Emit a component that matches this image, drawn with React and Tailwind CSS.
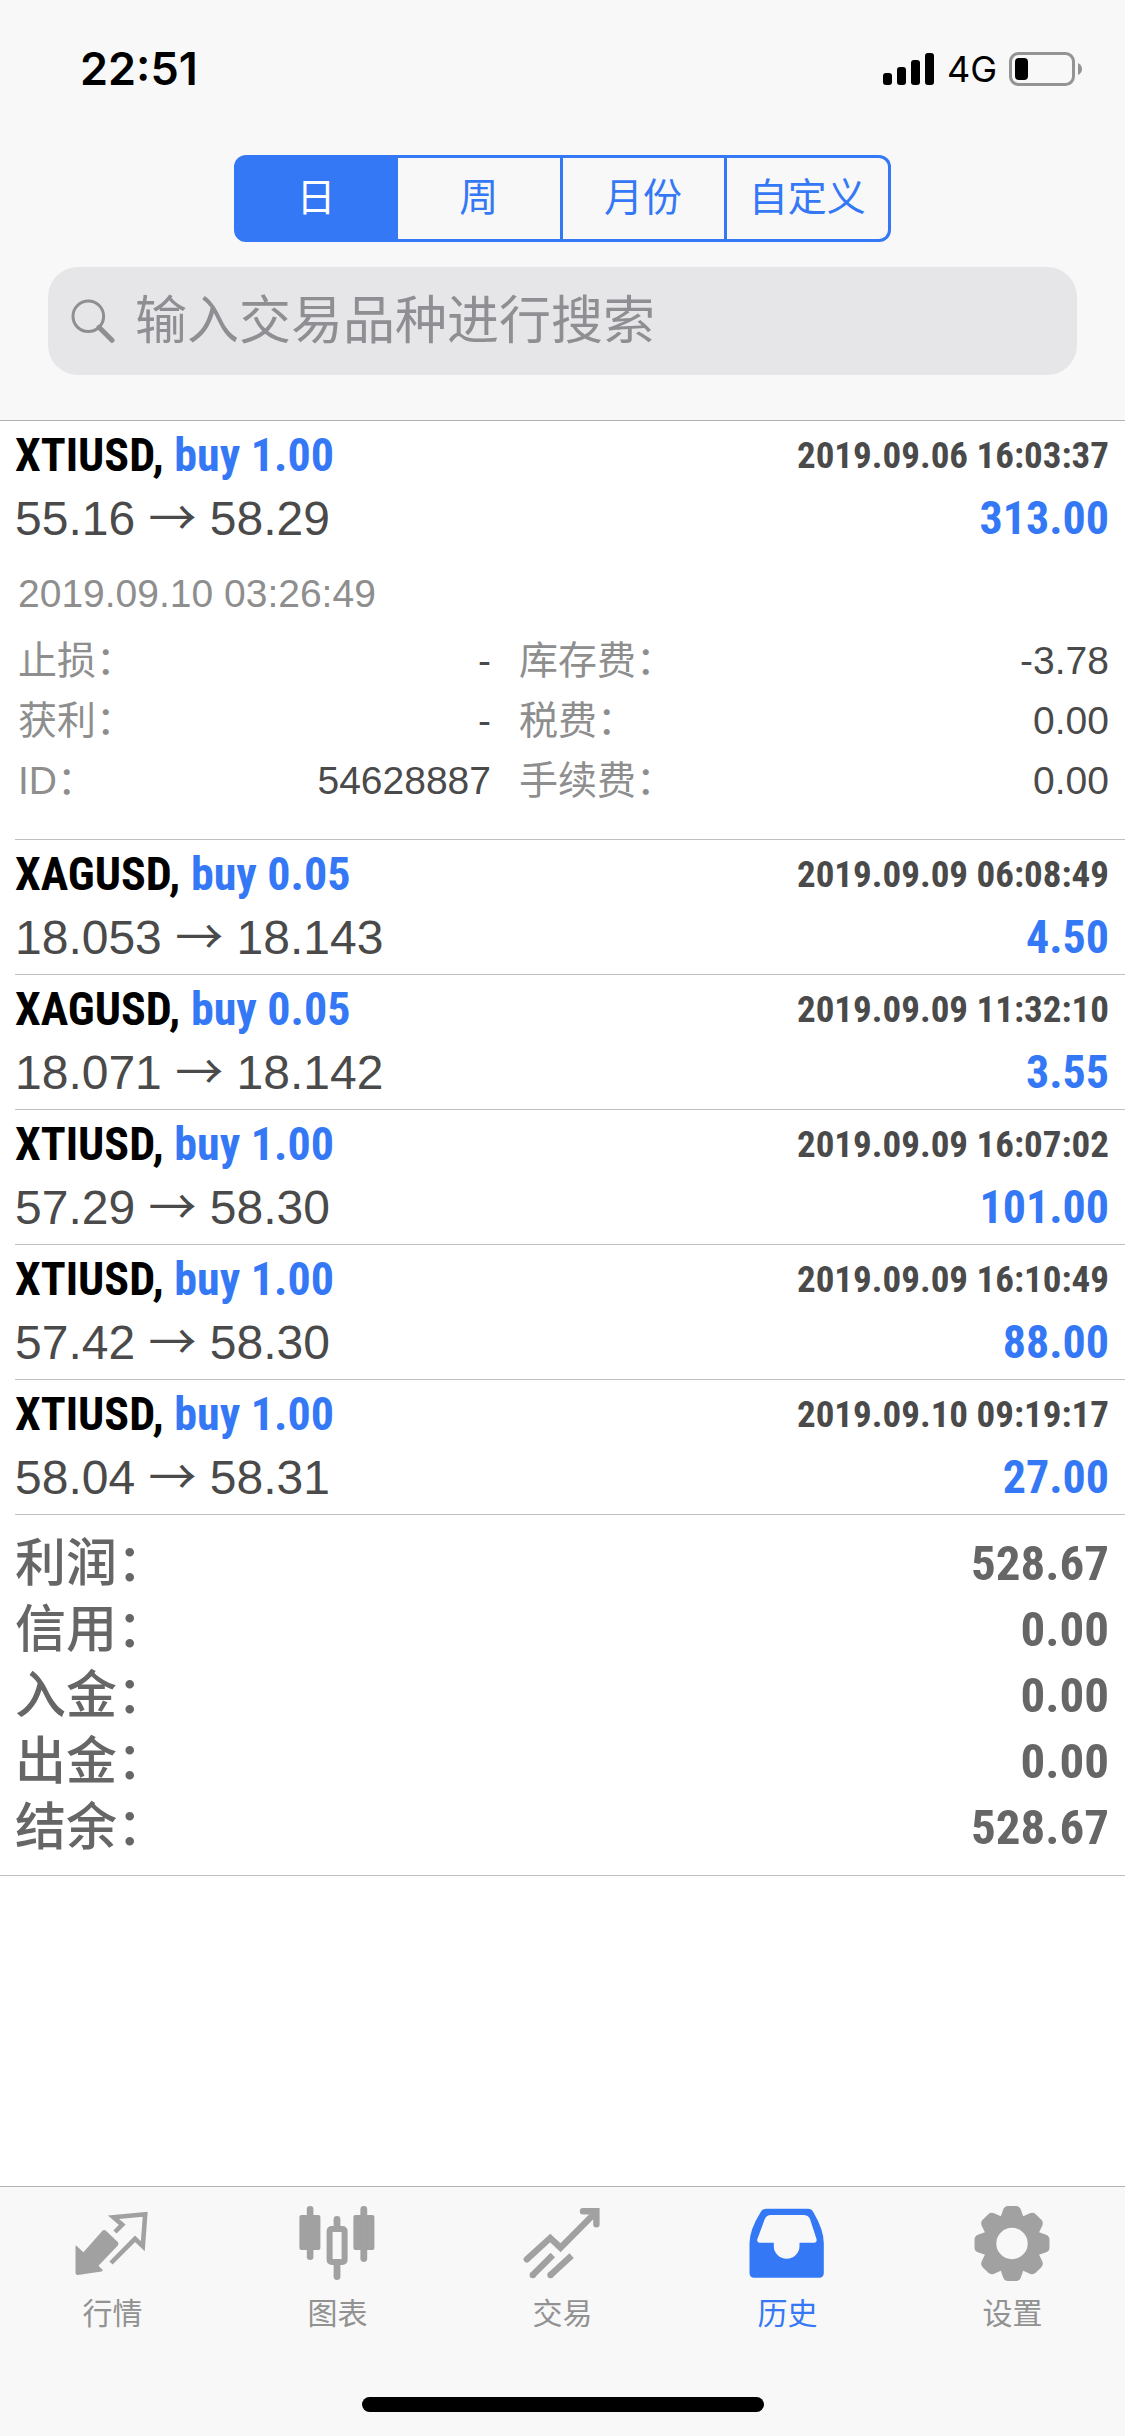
import { useState } from "react";

const periods = ["日", "周", "月份", "自定义"];

const trades = [
  {
    id: "54628887",
    symbol: "XTIUSD",
    volume: "1.00",
    open: "55.16",
    close: "58.29",
    time: "2019.09.06 16:03:37",
    profit: "313.00",
    details: {
      openTime: "2019.09.10 03:26:49",
      rows: [
        ["止损：", "-", "库存费：", "-3.78"],
        ["获利：", "-", "税费：", "0.00"],
        ["ID：", "54628887", "手续费：", "0.00"],
      ],
    },
  },
  { id: "2", symbol: "XAGUSD", volume: "0.05", open: "18.053", close: "18.143", time: "2019.09.09 06:08:49", profit: "4.50" },
  { id: "3", symbol: "XAGUSD", volume: "0.05", open: "18.071", close: "18.142", time: "2019.09.09 11:32:10", profit: "3.55" },
  { id: "4", symbol: "XTIUSD", volume: "1.00", open: "57.29", close: "58.30", time: "2019.09.09 16:07:02", profit: "101.00" },
  { id: "5", symbol: "XTIUSD", volume: "1.00", open: "57.42", close: "58.30", time: "2019.09.09 16:10:49", profit: "88.00" },
  { id: "6", symbol: "XTIUSD", volume: "1.00", open: "58.04", close: "58.31", time: "2019.09.10 09:19:17", profit: "27.00" },
];

const summary = [
  ["利润：", "528.67"],
  ["信用：", "0.00"],
  ["入金：", "0.00"],
  ["出金：", "0.00"],
  ["结余：", "528.67"],
];

function QuotesIcon() {
  return (
    <svg viewBox="0 0 80 80" className="size-20">
      <path
        d="M3.5 41.7 10.4 48.2 29 27.2Q31 25 33.5 27.2L44.8 38Q46.3 39.8 44.8 41.5L25.5 61.7 30 66.3 28.5 67.5 5 71Q2.5 71 2.5 68.5V41.7Z"
        fill="currentColor"
      />
      <path
        d="M42 28 49.2 20.7 40.5 13.2 72.2 10.3 69.8 42.2 62 34.8 38 59"
        fill="none"
        stroke="currentColor"
        strokeWidth="4.6"
      />
    </svg>
  );
}

function ChartIcon() {
  return (
    <svg viewBox="0 0 80 80" className="size-20" fill="currentColor">
      <rect x="1.4" y="11" width="21" height="35" rx="2" />
      <rect x="8.8" y="2" width="6.6" height="54" rx="3.3" />
      <rect x="55.4" y="11" width="21" height="35" rx="2" />
      <rect x="62.4" y="2" width="6.8" height="56" rx="3.4" />
      <rect x="35.6" y="12" width="6.8" height="14" rx="3.4" />
      <rect x="35.6" y="56" width="6.8" height="20" rx="3.4" />
      <rect x="31.6" y="25" width="15" height="33" rx="2" fill="none" stroke="currentColor" strokeWidth="6" />
    </svg>
  );
}

function TradeIcon() {
  return (
    <svg viewBox="0 0 80 80" className="size-20" fill="none" stroke="currentColor" strokeWidth="6.4">
      <path d="M3.8 55.3 27.2 34 37.5 43.7 72 9" strokeLinecap="round" />
      <path d="M60 7.2H73.4V20.3" strokeLinecap="round" />
      <path d="M10.5 70.3 29.8 51M28.2 70.3 48.6 51.6" />
      <path d="M9.8 71h.1M27.5 71h.1" strokeLinecap="round" />
    </svg>
  );
}

function HistoryIcon() {
  return (
    <svg viewBox="0 0 80 80" className="size-20" fill="currentColor" fillRule="evenodd">
      <path d="M18 4.7H60Q63.5 4.7 65.3 8 75.8 26 75.8 39V69Q75.8 73.7 71 73.7H6.3Q1.5 73.7 1.5 69V39Q1.5 26 12.7 8 14.5 4.7 18 4.7ZM23 11Q18.5 11 16.8 15L9.4 35Q8.4 38.7 11.5 38.7H25.8V42A12.8 12.8 0 0 0 51.5 42V38.7H66Q69.3 38.7 68.5 35L62 15Q60.3 11 55.5 11Z" />
    </svg>
  );
}

function SettingsIcon() {
  return (
    <svg viewBox="0 0 80 80" className="size-20">
      <g transform="translate(39 39.5)" fill="currentColor">
        <circle r="22.2" fill="none" stroke="currentColor" strokeWidth="13" />
        {[0, 45, 90, 135, 180, 225, 270, 315].map((a) => (
          <path
            key={a}
            transform={`rotate(${a})`}
            d="M-12-25-8.8-34Q-7.4-37.5-4-37.5H4Q7.4-37.5 8.8-34L12-25Z"
          />
        ))}
      </g>
    </svg>
  );
}

const tabs = [
  { label: "行情", Icon: QuotesIcon },
  { label: "图表", Icon: ChartIcon },
  { label: "交易", Icon: TradeIcon },
  { label: "历史", Icon: HistoryIcon, active: true },
  { label: "设置", Icon: SettingsIcon },
];

function StatusBar() {
  return (
    <div className="flex h-[132px] items-center justify-between pt-1.5 pr-[43px] pl-20 font-['Inter',sans-serif]">
      <span className="text-[45px] font-semibold">22:51</span>
      <div className="flex items-center gap-3">
        <svg viewBox="0 0 52 32" className="h-8 w-[52px]">
          <rect x="0" y="20" width="9" height="12" rx="3" />
          <rect x="14" y="14" width="9" height="18" rx="3" />
          <rect x="28" y="7" width="9" height="25" rx="3" />
          <rect x="42" y="0" width="9" height="32" rx="3" />
        </svg>
        <span className="text-[36px]">4G</span>
        <svg viewBox="0 0 73 34" className="h-[34px] w-[73px]">
          <rect x="1.5" y="1.5" width="63" height="31" rx="8" fill="none" stroke="#949494" strokeWidth="3" />
          <rect x="6" y="6" width="13" height="22" rx="4" />
          <path d="M69 11q4 2 4 6t-4 6z" fill="#949494" />
        </svg>
      </div>
    </div>
  );
}

function TradeItem({ trade }) {
  const { symbol, volume, open, close, time, profit, details } = trade;

  return (
    <li className="ml-[15px] border-b border-[#c0c0c0] pt-[3px] pr-4 pb-[5px]">
      <div className="flex justify-between font-['Roboto_Condensed',sans-serif] leading-[63px] font-bold">
        <h2 className="text-[46px] text-black">
          {symbol}, <span className="text-[#3478f6]">buy {volume}</span>
        </h2>
        <time className="text-[37px] text-[#4a4a4a]">{time}</time>
      </div>
      <div className="flex justify-between text-[48px] leading-[63px]">
        <p className="text-[#4a4a4a]">
          {open} <span className="font-['Noto_Sans_CJK_SC',sans-serif] leading-none">→</span> {close}
        </p>
        <p className="font-['Roboto_Condensed',sans-serif] text-[46px] font-bold text-[#3478f6]">{profit}</p>
      </div>

      {details && (
        <div className="pt-3.5 pb-[23px] pl-[3px] text-[39px] leading-[60px] text-[#8e8e8e]">
          <time>{details.openTime}</time>
          <div className="mt-[7px] grid grid-cols-[473px_1fr] gap-x-7">
            {details.rows.flatMap(([l1, v1, l2, v2]) => [
              <dl key={l1} className="flex justify-between">
                <dt>{l1}</dt>
                <dd className="text-[#4a4a4a]">{v1}</dd>
              </dl>,
              <dl key={l2} className="flex justify-between">
                <dt>{l2}</dt>
                <dd className="text-[#4a4a4a]">{v2}</dd>
              </dl>,
            ])}
          </div>
        </div>
      )}
    </li>
  );
}

export default function App() {
  const [period, setPeriod] = useState("日");

  return (
    <div
      lang="zh-CN"
      className="flex min-h-screen flex-col bg-white font-['Liberation_Sans','Noto_Sans_CJK_SC',sans-serif]"
    >
      <header className="border-b border-[#b2b2b2] bg-[#f8f8f8]">
        <StatusBar />
        <div className="px-12 pt-[23px] pb-[45px]">
          <div className="mx-auto grid h-[87px] w-[657px] grid-cols-4">
            {periods.map((p) => (
              <button
                key={p}
                type="button"
                onClick={() => setPeriod(p)}
                className={
                  p === period
                    ? "border-y-3 border-r-3 border-[#3478f6] bg-[#3478f6] text-[39px] text-white first:rounded-l-xl first:border-l-3 last:rounded-r-xl"
                    : "border-y-3 border-r-3 border-[#3478f6] text-[39px] text-[#3478f6] first:rounded-l-xl first:border-l-3 last:rounded-r-xl"
                }
              >
                {p}
              </button>
            ))}
          </div>

          <label className="mt-[25px] flex h-[108px] items-center gap-5 rounded-[30px] bg-[#e6e6e8] px-[23px]">
            <svg viewBox="0 0 44 44" className="size-11 shrink-0" fill="none" stroke="#8e8e93">
              <circle cx="17.3" cy="17.3" r="15.3" strokeWidth="3" />
              <path d="M28 28.3 41 41.3" strokeWidth="5" strokeLinecap="round" />
            </svg>
            <input
              type="search"
              aria-label="搜索"
              placeholder="输入交易品种进行搜索"
              className="w-full bg-transparent text-[52px] outline-none placeholder:text-[#8e8e93]"
            />
          </label>
        </div>
      </header>

      <main className="flex-1">
        <ul>
          {trades.map((trade) => (
            <TradeItem key={trade.id} trade={trade} />
          ))}
        </ul>

        <dl className="border-b border-[#c0c0c0] pt-4 pr-4 pb-3.5 pl-[15px] leading-[66px] text-[#666]">
          {summary.map(([label, value]) => (
            <div key={label} className="flex justify-between">
              <dt className="text-[51px] font-medium">{label}</dt>
              <dd className="font-['Roboto_Condensed',sans-serif] text-[49px] font-bold">{value}</dd>
            </div>
          ))}
        </dl>
      </main>

      <footer className="border-t border-[#b2b2b2] bg-[#f8f8f8]">
        <nav className="grid grid-cols-5 pt-[17px]">
          {tabs.map(({ label, Icon, active }) => (
            <a
              key={label}
              href="#"
              className={
                active
                  ? "flex flex-col items-center text-[#3478f6]"
                  : "flex flex-col items-center text-[#a1a1a1]"
              }
            >
              <Icon />
              <span className={active ? "mt-2.5 text-[30px] leading-10" : "mt-2.5 text-[30px] leading-10 text-[#929292]"}>
                {label}
              </span>
            </a>
          ))}
        </nav>
        <div className="mx-auto mt-[63px] mb-6 h-[15px] w-[402px] rounded-full bg-black" />
      </footer>
    </div>
  );
}
